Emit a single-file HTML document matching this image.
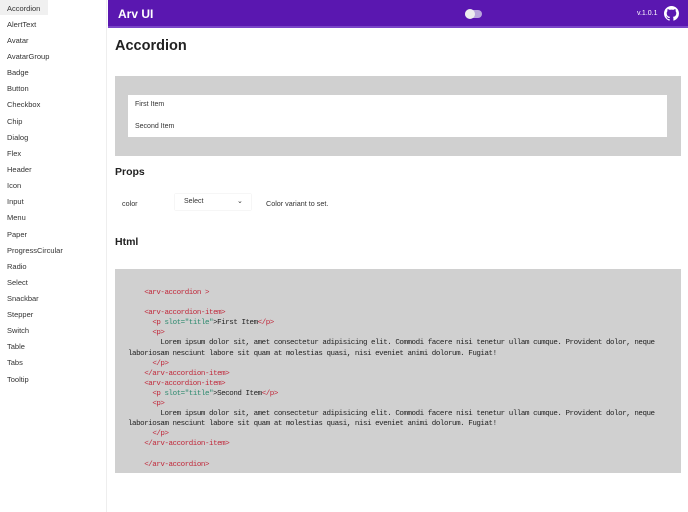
<!DOCTYPE html>
<html><head><meta charset="utf-8"><style>
*{margin:0;padding:0;box-sizing:border-box}
body{width:688px;height:512px;overflow:hidden;background:#fff;font-family:"Liberation Sans",sans-serif;position:relative}
.side{position:absolute;left:0;top:0;width:107px;height:512px;border-right:1px solid #eee;background:#fff}
.side div{position:absolute;left:7px;font-size:7.5px;color:#333}
.side .act{position:absolute;left:0;top:0;width:48px;height:15px;background:#f0f0f0}
.hdr{position:absolute;left:108px;top:0;width:580px;height:28px;background:#5a17b0;border-bottom:2px solid #7a45c8}
.hdr .t{position:absolute;left:10px;top:7px;color:#fff;font-weight:bold;font-size:12px}
.tog{position:absolute;left:357px;top:10px;width:17px;height:8px;border-radius:4px;background:#b9a6dd}
.tog:before{content:"";position:absolute;left:0;top:-1px;width:10px;height:10px;border-radius:5px;background:#eee}
.ver{position:absolute;left:529px;top:10px;color:#fff;font-size:7px}
h1{position:absolute;left:115px;top:38px;font-size:14.5px;color:#222}
h2{position:absolute;left:115px;font-size:10.5px;color:#222}
.demo{position:absolute;left:115px;top:76px;width:566px;height:80px;background:#d0d0d0}
.inner{position:absolute;left:13px;top:19px;width:539px;height:42px;background:#fff}
.inner div{position:absolute;left:7px;font-size:7px;color:#333}
.props{position:absolute;top:199px;font-size:7.2px;color:#333}
.sel{position:absolute;left:175px;top:194px;width:76px;height:16px;background:#fff;box-shadow:0 0 1px #ccc}
.code{position:absolute;left:115px;top:269px;width:566px;height:204px;background:#d0d0d0}
pre{position:absolute;left:13px;top:19px;font-family:"Liberation Mono",monospace;font-size:7.5px;letter-spacing:-0.45px;line-height:10.1px;color:#222;white-space:pre}
.r{color:#c0283a}.g{color:#2e8a6f}
</style></head><body>
<div class="side"><span class="act"></span>
<div style="top:4px">Accordion</div><div style="top:20px">AlertText</div><div style="top:36px">Avatar</div><div style="top:52px">AvatarGroup</div><div style="top:68px">Badge</div><div style="top:84px">Button</div><div style="top:100px">Checkbox</div><div style="top:117px">Chip</div><div style="top:133px">Dialog</div><div style="top:149px">Flex</div><div style="top:165px">Header</div><div style="top:181px">Icon</div><div style="top:197px">Input</div><div style="top:213px">Menu</div><div style="top:230px">Paper</div><div style="top:246px">ProgressCircular</div><div style="top:262px">Radio</div><div style="top:278px">Select</div><div style="top:294px">Snackbar</div><div style="top:310px">Stepper</div><div style="top:326px">Switch</div><div style="top:342px">Table</div><div style="top:358px">Tabs</div><div style="top:375px">Tooltip</div>
</div>
<div class="hdr"><div class="t">Arv UI</div><div class="tog"></div><div class="ver">v.1.0.1</div>
<svg style="position:absolute;left:556px;top:6px" width="15" height="15" viewBox="0 0 16 16"><path fill="#fff" d="M8 0C3.58 0 0 3.58 0 8c0 3.54 2.290 6.530 5.470 7.590.4.07.55-.17.55-.38v-1.33c-2.23.48-2.7-1.070-2.7-1.070-.36-.92-.89-1.170-.89-1.170-.73-.5.06-.49.06-.49.8.06 1.230.83 1.230.83.71 1.220 1.870.87 2.330.66.07-.52.28-.87.5-1.070-1.780-.2-3.640-.89-3.640-3.950 0-.87.31-1.590.82-2.150-.08-.2-.36-1.020.08-2.120 0 0 .67-.21 2.200.82.64-.18 1.320-.27 2-.27.68 0 1.360.09 2 .27 1.530-1.040 2.200-.82 2.200-.82.44 1.100.16 1.920.08 2.120.51.56.82 1.270.82 2.150 0 3.070-1.870 3.750-3.650 3.950.29.25.54.73.54 1.480v2.200c0 .21.15.46.55.38A8.013 8.013 0 0016 8c0-4.420-3.580-8-8-8z"/></svg>
</div>
<h1>Accordion</h1>
<div class="demo"><div class="inner"><div style="top:6px">First Item</div><div style="top:28px">Second Item</div></div></div>
<h2 style="top:166px">Props</h2>
<div class="props" style="left:122px">color</div>
<div class="sel"><span style="position:absolute;left:9px;top:4px;font-size:7px;color:#333">Select</span><span style="position:absolute;left:62px;top:3px;font-size:7px;color:#333">&#8964;</span></div>
<div class="props" style="left:266px">Color variant to set.</div>
<h2 style="top:236px">Html</h2>
<div class="code"><pre>
    <span class="r">&lt;arv-accordion &gt;</span>

    <span class="r">&lt;arv-accordion-item&gt;</span>
      <span class="r">&lt;p</span> <span class="g">slot="title"</span>&gt;First Item<span class="r">&lt;/p&gt;</span>
      <span class="r">&lt;p&gt;</span>
        Lorem ipsum dolor sit, amet consectetur adipisicing elit. Commodi facere nisi tenetur ullam cumque. Provident dolor, neque
laboriosam nesciunt labore sit quam at molestias quasi, nisi eveniet animi dolorum. Fugiat!
      <span class="r">&lt;/p&gt;</span>
    <span class="r">&lt;/arv-accordion-item&gt;</span>
    <span class="r">&lt;arv-accordion-item&gt;</span>
      <span class="r">&lt;p</span> <span class="g">slot="title"</span>&gt;Second Item<span class="r">&lt;/p&gt;</span>
      <span class="r">&lt;p&gt;</span>
        Lorem ipsum dolor sit, amet consectetur adipisicing elit. Commodi facere nisi tenetur ullam cumque. Provident dolor, neque
laboriosam nesciunt labore sit quam at molestias quasi, nisi eveniet animi dolorum. Fugiat!
      <span class="r">&lt;/p&gt;</span>
    <span class="r">&lt;/arv-accordion-item&gt;</span>

    <span class="r">&lt;/arv-accordion&gt;</span>
</pre></div>
</body></html>
